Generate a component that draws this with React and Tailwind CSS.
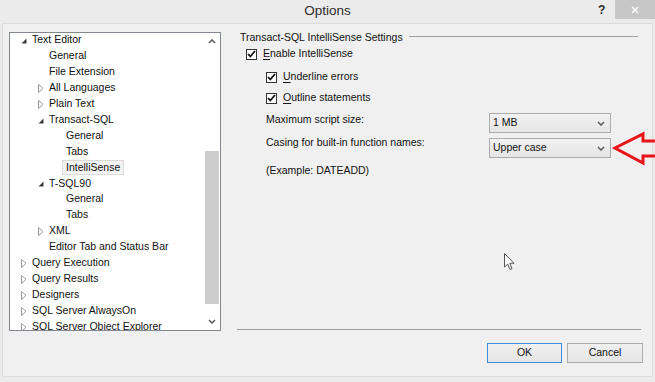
import React from "react";

const font = { fontFamily: '"Liberation Sans", Arial, sans-serif' };

const tree = [
  { label: "Text Editor", level: 0, state: "open" },
  { label: "General", level: 1 },
  { label: "File Extension", level: 1 },
  { label: "All Languages", level: 1, state: "closed" },
  { label: "Plain Text", level: 1, state: "closed" },
  { label: "Transact-SQL", level: 1, state: "open" },
  { label: "General", level: 2 },
  { label: "Tabs", level: 2 },
  { label: "IntelliSense", level: 2, selected: true },
  { label: "T-SQL90", level: 1, state: "open" },
  { label: "General", level: 2 },
  { label: "Tabs", level: 2 },
  { label: "XML", level: 1, state: "closed" },
  { label: "Editor Tab and Status Bar", level: 1 },
  { label: "Query Execution", level: 0, state: "closed" },
  { label: "Query Results", level: 0, state: "closed" },
  { label: "Designers", level: 0, state: "closed" },
  { label: "SQL Server AlwaysOn", level: 0, state: "closed" },
  { label: "SQL Server Object Explorer", level: 0, state: "closed" },
];

const indent = ["pl-[11px]", "pl-[28px]", "pl-[45px]"];

function Expander({ state }) {
  if (state === "open") {
    return (
      <svg width="6" height="6" viewBox="0 0 6 6" className="mt-[2px]">
        <polygon points="5.5,0.5 5.5,5.5 0.5,5.5" fill="#3a3a3a" />
      </svg>
    );
  }
  if (state === "closed") {
    return (
      <svg width="6" height="9" viewBox="0 0 6 9" className="mt-[1px]">
        <polygon points="0.5,0.5 5,4.5 0.5,8.5" fill="none" stroke="#9a9a9a" strokeWidth="1" />
      </svg>
    );
  }
  return null;
}

function TreeRow({ item }) {
  return (
    <div className={`flex h-[15.95px] items-center ${indent[item.level]}`}>
      <div className="flex w-[11px] shrink-0 items-center">
        <Expander state={item.state} />
      </div>
      {item.selected ? (
        <span className="-ml-[4px] flex h-[15px] items-center whitespace-nowrap border border-[#dadada] bg-[#f3f3f3] px-[3px]">
          {item.label}
        </span>
      ) : (
        <span className="whitespace-nowrap">{item.label}</span>
      )}
    </div>
  );
}

function Chevron({ up }) {
  return (
    <svg width="8" height="5" viewBox="0 0 8 5">
      <polyline
        points={up ? "1,4 4,1 7,4" : "1,1 4,4 7,1"}
        fill="none"
        stroke="#606060"
        strokeWidth="1.6"
      />
    </svg>
  );
}

function Check({ accel, rest, className }) {
  return (
    <div className={`flex h-[16px] items-center ${className}`}>
      <div className="flex h-[11px] w-[11px] items-center justify-center border border-[#333333] bg-white">
        <svg width="9" height="8" viewBox="0 0 9 8">
          <polyline points="1,4 3.3,6.5 8,1" fill="none" stroke="#111111" strokeWidth="1.8" />
        </svg>
      </div>
      <span className="ml-[6px]">
        <span className="underline underline-offset-2">{accel}</span>
        {rest}
      </span>
    </div>
  );
}

function Select({ value, className }) {
  return (
    <div
      className={`flex h-[20px] w-[122px] items-center justify-between border border-[#acacac] bg-gradient-to-b from-[#f2f2f2] to-[#e5e5e5] pl-[3px] pr-[5px] ${className}`}
    >
      <span>{value}</span>
      <Chevron />
    </div>
  );
}

export default function App() {
  return (
    <div
      className="relative flex h-[382px] w-[655px] flex-col overflow-hidden bg-[#ebebeb] text-[10.5px] text-[#111111]"
      style={font}
    >
      {/* Title bar */}
      <div className="relative flex h-[23px] shrink-0 items-center justify-center">
        <span className="text-[13.5px] text-[#2b2b2b]">Options</span>
        <span className="absolute left-[598px] top-[1px] text-[12px] font-bold text-[#2b2b2b]">?</span>
        <div className="absolute right-0 top-0 flex h-[19px] w-[40px] items-center justify-center bg-[#c7c7c7]">
          <svg width="8" height="8" viewBox="0 0 8 8">
            <path d="M1 1 L7 7 M7 1 L1 7" stroke="white" strokeWidth="1.4" />
          </svg>
        </div>
      </div>

      {/* Content panel */}
      <div className="mx-[2px] mb-[5px] flex flex-1 border border-[#dcdcdc] bg-[#f0f0f0] pl-[6px] pt-[8px]">
        {/* Tree */}
        <div className="flex h-[299px] w-[212px] shrink-0 overflow-hidden border border-[#828790] bg-white">
          <div className="-mt-[1px] flex-1 overflow-hidden">
            {tree.map((item, i) => (
              <TreeRow key={i} item={item} />
            ))}
          </div>
          <div className="flex w-[17px] shrink-0 flex-col">
            <div className="flex h-[17px] items-center justify-center">
              <Chevron up />
            </div>
            <div className="flex-1 pl-[2px] pt-[101px]">
              <div className="h-[153px] w-[14px] bg-[#cdcdcd]" />
            </div>
            <div className="flex h-[17px] items-center justify-center">
              <Chevron />
            </div>
          </div>
        </div>

        {/* Settings */}
        <div className="ml-[16px] flex w-[404px] flex-col">
          <div className="-mt-[1px] flex h-[14px] items-center pl-[3px]">
            <span className="whitespace-nowrap">Transact-SQL IntelliSense Settings</span>
            <div className="mb-[3px] ml-[6px] mr-[3px] flex-1 border-t border-[#a0a0a0]" />
          </div>
          <Check className="ml-[9px] mt-[1px]" accel="E" rest="nable IntelliSense" />
          <Check className="ml-[29px] mt-[7px]" accel="U" rest="nderline errors" />
          <Check className="ml-[29px] mt-[5px]" accel="O" rest="utline statements" />
          <div className="ml-[29px] mt-[6px] flex">
            <span className="flex h-[16px] w-[223px] items-center">Maximum script size:</span>
            <Select className="mt-[1px]" value="1  MB" />
          </div>
          <div className="ml-[29px] mt-[2px] flex">
            <span className="flex h-[16px] w-[223px] items-center">Casing for built-in function names:</span>
            <Select className="mt-[3px]" value="Upper case" />
          </div>
          <div className="ml-[29px] mt-[5px] flex h-[16px] items-center">(Example: DATEADD)</div>

          <div className="flex-1" />
          <div className="border-t border-[#a0a0a0]" />
          <div className="-mr-[2px] mb-[13px] mt-[13px] flex justify-end gap-[5px]">
            <div className="flex h-[20px] w-[75px] items-center justify-center border border-[#3c8ee0] bg-gradient-to-b from-[#f0f0f0] to-[#e5e5e5]">
              OK
            </div>
            <div className="flex h-[20px] w-[76px] items-center justify-center border border-[#acacac] bg-gradient-to-b from-[#f0f0f0] to-[#e5e5e5]">
              Cancel
            </div>
          </div>
        </div>
      </div>

      {/* Red annotation arrow */}
      <svg className="absolute left-[610px] top-[130px]" width="45" height="38" viewBox="0 0 45 38">
        <polyline
          points="46,11 33,11 33,4 5,18 33,33 33,26 46,26"
          fill="none"
          stroke="#e8131b"
          strokeWidth="3"
          strokeLinejoin="miter"
        />
      </svg>

      {/* Mouse cursor */}
      <svg className="absolute left-[504px] top-[253px]" width="12" height="18" viewBox="0 0 12 18">
        <path
          d="M0.5 0.5 L0.5 14 L3.7 11 L6 16.5 L8 15.6 L5.8 10.3 L10 10.3 Z"
          fill="white"
          stroke="#555555"
          strokeWidth="1"
        />
      </svg>
    </div>
  );
}
